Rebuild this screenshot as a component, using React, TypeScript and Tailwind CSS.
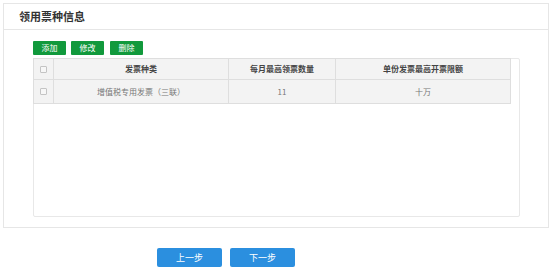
import React from "react";

const font = { fontFamily: '"Noto Sans CJK SC", "Microsoft YaHei", sans-serif' };

function Box() {
  return <span className="inline-block w-[7px] h-[7px] border border-[#c4c4c4] bg-[#f7f7f7] rounded-[1px]" />;
}

export default function App() {
  return (
    <div className="w-[554px] h-[270px] bg-white overflow-hidden" style={font}>
      <div className="ml-[3px] mt-[3px] w-[546px] h-[225px] border border-[#e6e6e6] flex flex-col">
        <div className="h-[26px] border-b border-[#e6e6e6] flex items-center pl-[15px] text-[11px] font-bold text-[#333]">
          领用票种信息
        </div>
        <div className="pl-[29px] pt-[11px]">
          <div className="flex gap-[5px] text-[8px] text-white">
            <button className="w-[33px] h-[14px] bg-[#11993c] rounded-[1px] flex items-center justify-center">添加</button>
            <button className="w-[33px] h-[14px] bg-[#11993c] rounded-[1px] flex items-center justify-center">修改</button>
            <button className="w-[33px] h-[14px] bg-[#11993c] rounded-[1px] flex items-center justify-center ml-[1px]">删除</button>
          </div>
          <div className="mt-[3px] w-[487px] h-[159px] border border-[#e8e8e8] rounded-[2px]">
            <table className="w-[478px] -mt-px -ml-px border-collapse text-[8px] text-[#777] bg-[#f3f3f3]">
              <thead>
                <tr className="h-[21px]">
                  <th className="w-[20px] border border-[#dedede] font-normal"><div className="flex justify-center"><Box /></div></th>
                  <th className="w-[175px] border border-[#dedede] font-semibold text-[#444]">发票种类</th>
                  <th className="w-[107px] border border-[#dedede] font-semibold text-[#444]">每月最高领票数量</th>
                  <th className="border border-[#dedede] font-semibold text-[#444]">单份发票最高开票限额</th>
                </tr>
              </thead>
              <tbody>
                <tr className="h-[24px]">
                  <td className="border border-[#dedede]"><div className="flex justify-center"><Box /></div></td>
                  <td className="border border-[#dedede] text-center">增值税专用发票（三联）</td>
                  <td className="border border-[#dedede] text-center">11</td>
                  <td className="border border-[#dedede] text-center">十万</td>
                </tr>
              </tbody>
            </table>
          </div>
        </div>
      </div>
      <div className="flex pl-[157px] pt-[20px] gap-[8px] text-[9px] text-white">
        <button className="w-[65px] h-[19px] bg-[#2b8fdf] rounded-[2px] flex items-center justify-center">上一步</button>
        <button className="w-[65px] h-[19px] bg-[#2b8fdf] rounded-[2px] flex items-center justify-center">下一步</button>
      </div>
    </div>
  );
}
